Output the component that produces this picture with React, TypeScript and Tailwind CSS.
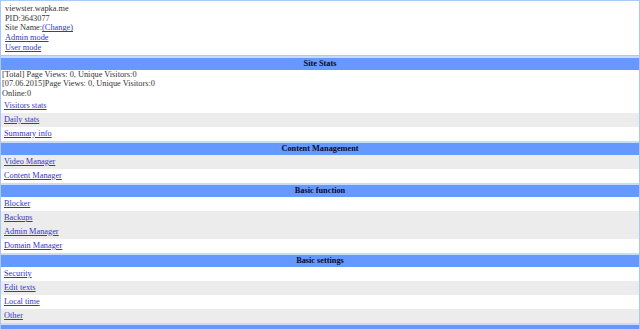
const sections = [
  {
    title: 'Site Stats',
    stats: ['[Total] Page Views: 0, Unique Visitors:0', '[07.06.2015]Page Views: 0, Unique Visitors:0', 'Online:0'],
    links: [
      { label: 'Visitors stats', grey: false },
      { label: 'Daily stats', grey: true },
      { label: 'Summary info', grey: false },
    ],
  },
  {
    title: 'Content Management',
    links: [
      { label: 'Video Manager', grey: true },
      { label: 'Content Manager', grey: false },
    ],
  },
  {
    title: 'Basic function',
    links: [
      { label: 'Blocker', grey: false },
      { label: 'Backups', grey: true },
      { label: 'Admin Manager', grey: true },
      { label: 'Domain Manager', grey: false },
    ],
  },
  {
    title: 'Basic settings',
    links: [
      { label: 'Security', grey: false },
      { label: 'Edit texts', grey: true },
      { label: 'Local time', grey: false },
      { label: 'Other', grey: true },
    ],
  },
  { title: '', links: [] },
]

function Link({ children }: { children: React.ReactNode }) {
  return <a className="text-[#3535c8] underline cursor-pointer">{children}</a>
}

export default function App() {
  return (
    <div className="w-[640px] h-[329px] overflow-hidden bg-white text-[8.3px] leading-[9.7px] text-[#333] font-['Liberation_Serif',serif]">
      {/* account box */}
      <div className="border-t border-b border-x border-[#a8c8f8] pl-[4px] pt-[3px] pb-[2px]">
        <div>viewster.wapka.me</div>
        <div>PID:3643077</div>
        <div>
          Site Name:<Link>(Change)</Link>
        </div>
        <div>
          <Link>Admin mode</Link>
        </div>
        <div>
          <Link>User mode</Link>
        </div>
      </div>

      {sections.map((s, i) => (
        <div key={i} className="border-x border-[#a8c8f8]">
          <div className="border-t-2 border-[#c6dcff] h-[14px] bg-[#6699ff] flex items-center justify-center font-bold text-[#0a0a2a]">
            {s.title}
          </div>
          {s.stats && (
            <div className="pl-[1px] py-[0.5px]">
              {s.stats.map((t) => (
                <div key={t} className="h-[9.33px] leading-[9.33px]">{t}</div>
              ))}
            </div>
          )}
          {s.links.map((l) => (
            <div
              key={l.label}
              className={`h-[14px] flex items-center pl-[3px] ${l.grey ? 'bg-[#ececec]' : 'bg-white'}`}
            >
              <Link>{l.label}</Link>
            </div>
          ))}
        </div>
      ))}
    </div>
  )
}
